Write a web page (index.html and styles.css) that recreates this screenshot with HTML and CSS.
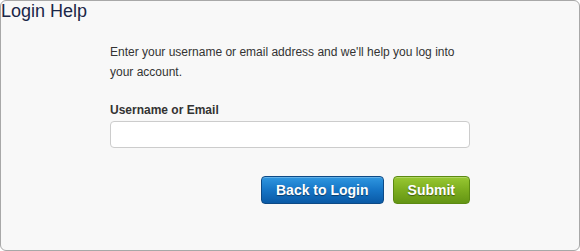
FILE: index.html
```html
<!DOCTYPE html>
<html>
<head>
<meta charset="utf-8">
<link rel="stylesheet" href="styles.css">
</head>
<body>
<div class="panel">
  <h1 class="title">Login Help</h1>
  <form class="form">
    <p class="intro">Enter your username or email address and we'll help you log into your account.</p>
    <label class="label" for="user">Username or Email</label>
    <input class="input" id="user" type="text">
    <div class="actions">
      <button type="button" class="btn btn-blue">Back to Login</button>
      <button type="button" class="btn btn-green">Submit</button>
    </div>
  </form>
</div>
</body>
</html>
```
FILE: styles.css
```css
html, body {
  margin: 0;
  padding: 0;
  background: #ffffff;
}
body {
  font-family: "Liberation Sans", Arial, sans-serif;
}
.panel {
  box-sizing: border-box;
  width: 580px;
  height: 251px;
  border: 1px solid #a8a8a8;
  border-radius: 6px;
  background: #f8f8f8;
}
.title {
  margin: 0;
  padding: 0;
  font-size: 18px;
  font-weight: normal;
  line-height: 22px;
  color: #1b2748;
  position: relative;
  top: -1px;
}
.form {
  margin: 19px 0 0 109px;
  width: 360px;
  display: flex;
  flex-direction: column;
}
.intro {
  margin: 0;
  font-size: 12px;
  line-height: 20px;
  color: #333333;
}
.label {
  margin-top: 19px;
  font-size: 12px;
  font-weight: bold;
  line-height: 18px;
  color: #333333;
}
.input {
  box-sizing: border-box;
  margin: 2px 0 0 0;
  width: 360px;
  height: 27px;
  border: 1px solid #cccccc;
  border-radius: 4px;
  background: #ffffff;
  padding: 0 6px;
  outline: none;
}
.actions {
  margin-top: 28px;
  display: flex;
  justify-content: flex-end;
  gap: 9px;
}
.btn {
  box-sizing: border-box;
  height: 28px;
  padding: 0 14px;
  border-radius: 4px;
  font-family: "Liberation Sans", Arial, sans-serif;
  font-size: 14px;
  font-weight: bold;
  color: #ffffff;
  text-shadow: 0 1px 1px rgba(0, 0, 0, 0.45);
  cursor: pointer;
}
.btn-blue {
  border: 1px solid #0d4a86;
  background: linear-gradient(to bottom, #2f97e0 0%, #1675c6 50%, #0a5aa6 100%);
  box-shadow: inset 0 1px 0 rgba(255, 255, 255, 0.25);
}
.btn-green {
  border: 1px solid #5c8a12;
  background: linear-gradient(to bottom, #98c832 0%, #7cad1f 50%, #649514 100%);
  box-shadow: inset 0 1px 0 rgba(255, 255, 255, 0.25);
}
```
